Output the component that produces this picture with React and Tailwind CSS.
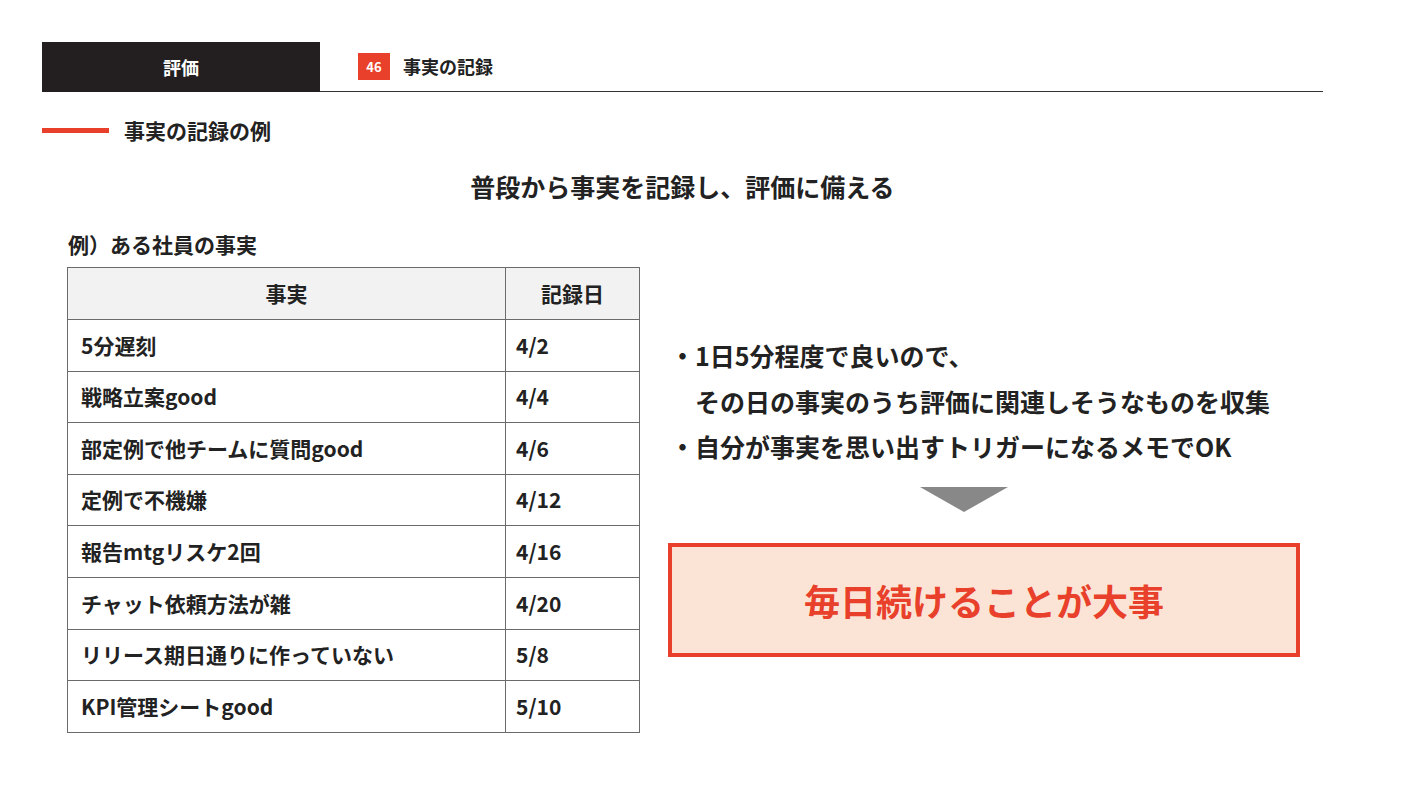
import React from 'react';

const facts = [
  { text: '5分遅刻', date: '4/2' },
  { text: '戦略立案good', date: '4/4' },
  { text: '部定例で他チームに質問good', date: '4/6' },
  { text: '定例で不機嫌', date: '4/12' },
  { text: '報告mtgリスケ2回', date: '4/16' },
  { text: 'チャット依頼方法が雑', date: '4/20' },
  { text: 'リリース期日通りに作っていない', date: '5/8' },
  { text: 'KPI管理シートgood', date: '5/10' },
];

const App = () => {
  return (
    <div
      className="min-h-screen w-[1420px] bg-white pt-[42px] pl-[42px] text-[#222]"
      style={{ fontFamily: '"Noto Sans CJK JP", "Noto Sans", sans-serif' }}
    >
      <div className="w-[1281px]">
        {/* Header */}
        <div className="flex h-[50px]">
          <div className="flex w-[278px] items-center justify-center bg-[#231f20] text-[18px] font-bold text-white">
            評価
          </div>
          <div className="flex flex-1 items-center border-b border-[#333] pl-[38px]">
            <span className="flex h-[27px] w-[32px] items-center justify-center bg-[#e8402a] text-[13px] font-bold text-white">
              46
            </span>
            <span className="ml-[13px] text-[18px] font-bold">事実の記録</span>
          </div>
        </div>

        {/* Section title */}
        <div className="mt-[26px] flex h-[24px] items-center">
          <div className="h-[5px] w-[67px] bg-[#e8402a]" />
          <span className="ml-[15px] text-[21px] font-bold leading-[24px]">事実の記録の例</span>
        </div>

        <h2 className="mt-[30px] text-center text-[25px] font-bold leading-[28px]">
          普段から事実を記録し、評価に備える
        </h2>

        <div className="mt-[32px] flex">
          {/* Left: table */}
          <div className="w-[598px] pl-[25px]">
            <p className="pl-[1px] text-[21px] font-bold leading-[24px]">例）ある社員の事実</p>
            <table className="mt-[11px] w-[573px] border-collapse text-[21px] font-bold">
              <thead>
                <tr className="h-[52px] bg-[#f2f2f2]">
                  <th className="border border-[#6b6b6b] text-center font-bold">事実</th>
                  <th className="w-[134px] border border-[#6b6b6b] text-center font-bold">記録日</th>
                </tr>
              </thead>
              <tbody>
                {facts.map((f, i) => (
                  <tr key={i} className="h-[51.6px]">
                    <td className="border border-[#6b6b6b] pl-[13px]">{f.text}</td>
                    <td className="border border-[#6b6b6b] pl-[10px]">{f.date}</td>
                  </tr>
                ))}
              </tbody>
            </table>
          </div>

          {/* Right: notes */}
          <div className="ml-[28px] flex w-[632px] flex-col pt-[101px]">
            <div className="pl-[2px] text-[25px] font-bold leading-[45.5px]">
              <div className="flex">
                <span className="w-[25px]">・</span>
                <span>1日5分程度で良いので、</span>
              </div>
              <div className="pl-[25px]">その日の事実のうち評価に関連しそうなものを収集</div>
              <div className="flex">
                <span className="w-[25px]">・</span>
                <span>自分が事実を思い出すトリガーになるメモでOK</span>
              </div>
            </div>
            <div className="mt-[17px] ml-[252px] h-0 w-0 border-x-[44px] border-t-[25px] border-x-transparent border-t-[#888]" />
            <div className="mt-[31px] flex h-[114px] items-center justify-center border-[4px] border-[#e8402a] bg-[#fbe4d6] text-[36px] font-bold text-[#e8402a]">
              毎日続けることが大事
            </div>
          </div>
        </div>
      </div>
    </div>
  );
};

export default App;
